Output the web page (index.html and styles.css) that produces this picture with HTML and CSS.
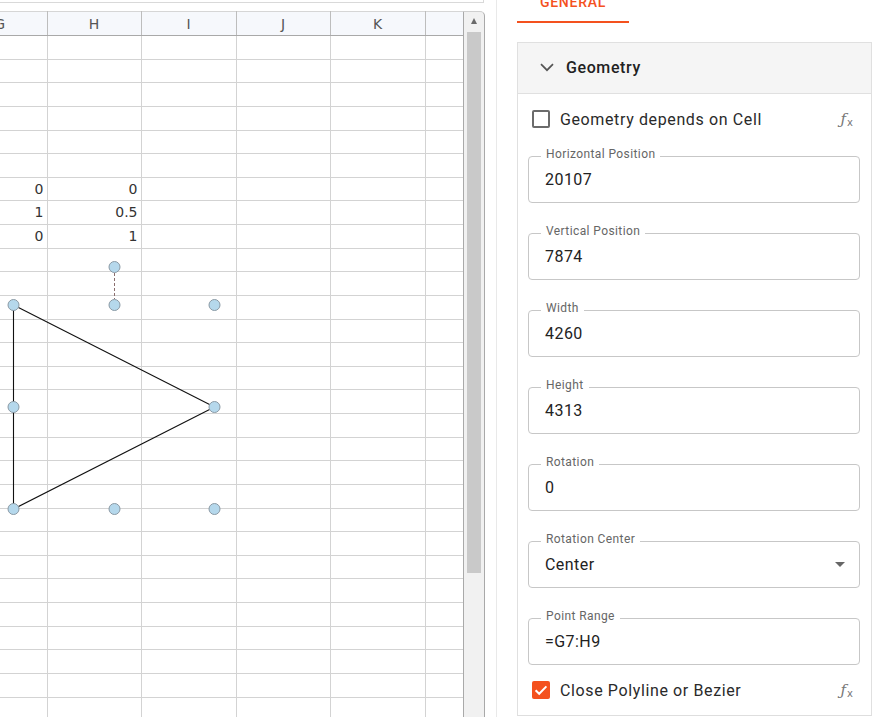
FILE: index.html
```html
<!DOCTYPE html>
<html>
<head>
<meta charset="utf-8">
<title>Geometry</title>
<link rel="stylesheet" href="styles.css">
</head>
<body>
<div class="app">
  <div class="sheet-area">
    <div class="formula-bar"></div>
    <div class="sheet">
      <div class="grid-wrap">
        <table class="grid">
          <colgroup>
            <col class="w94"><col class="w94"><col class="w95"><col class="w94"><col class="w95"><col class="w95">
          </colgroup>
          <thead>
            <tr><th>G</th><th>H</th><th>I</th><th>J</th><th>K</th><th></th></tr>
          </thead>
          <tbody>
            <tr><td></td><td></td><td></td><td></td><td></td><td></td></tr>
            <tr><td></td><td></td><td></td><td></td><td></td><td></td></tr>
            <tr><td></td><td></td><td></td><td></td><td></td><td></td></tr>
            <tr><td></td><td></td><td></td><td></td><td></td><td></td></tr>
            <tr><td></td><td></td><td></td><td></td><td></td><td></td></tr>
            <tr><td></td><td></td><td></td><td></td><td></td><td></td></tr>
            <tr><td>0</td><td>0</td><td></td><td></td><td></td><td></td></tr>
            <tr><td>1</td><td>0.5</td><td></td><td></td><td></td><td></td></tr>
            <tr><td>0</td><td>1</td><td></td><td></td><td></td><td></td></tr>
            <tr><td></td><td></td><td></td><td></td><td></td><td></td></tr>
            <tr><td></td><td></td><td></td><td></td><td></td><td></td></tr>
            <tr><td></td><td></td><td></td><td></td><td></td><td></td></tr>
            <tr><td></td><td></td><td></td><td></td><td></td><td></td></tr>
            <tr><td></td><td></td><td></td><td></td><td></td><td></td></tr>
            <tr><td></td><td></td><td></td><td></td><td></td><td></td></tr>
            <tr><td></td><td></td><td></td><td></td><td></td><td></td></tr>
            <tr><td></td><td></td><td></td><td></td><td></td><td></td></tr>
            <tr><td></td><td></td><td></td><td></td><td></td><td></td></tr>
            <tr><td></td><td></td><td></td><td></td><td></td><td></td></tr>
            <tr><td></td><td></td><td></td><td></td><td></td><td></td></tr>
            <tr><td></td><td></td><td></td><td></td><td></td><td></td></tr>
            <tr><td></td><td></td><td></td><td></td><td></td><td></td></tr>
            <tr><td></td><td></td><td></td><td></td><td></td><td></td></tr>
            <tr><td></td><td></td><td></td><td></td><td></td><td></td></tr>
            <tr><td></td><td></td><td></td><td></td><td></td><td></td></tr>
            <tr><td></td><td></td><td></td><td></td><td></td><td></td></tr>
            <tr><td></td><td></td><td></td><td></td><td></td><td></td></tr>
            <tr><td></td><td></td><td></td><td></td><td></td><td></td></tr>
            <tr><td></td><td></td><td></td><td></td><td></td><td></td></tr>
          </tbody>
        </table>
        <svg class="shape" width="463" height="706" viewBox="0 0 463 706">
          <polygon points="13.5,294 214.5,396 13.5,498" fill="none" stroke="#111" stroke-width="1.1"/>
          <line x1="114.5" y1="262" x2="114.5" y2="288" stroke="#8a6e6e" stroke-width="1" stroke-dasharray="3,2"/>
          <g fill="#b5d8ec" stroke="#8b9aa5" stroke-width="1">
            <circle cx="114.5" cy="256" r="5.5"/>
            <circle cx="13.5" cy="294" r="5.5"/>
            <circle cx="114.5" cy="294" r="5.5"/>
            <circle cx="214.5" cy="294" r="5.5"/>
            <circle cx="13.5" cy="396" r="5.5"/>
            <circle cx="214.5" cy="396" r="5.5"/>
            <circle cx="13.5" cy="498" r="5.5"/>
            <circle cx="114.5" cy="498" r="5.5"/>
            <circle cx="214.5" cy="498" r="5.5"/>
          </g>
        </svg>
      </div>
      <div class="vscroll">
        <div class="vscroll-arrow"></div>
        <div class="vscroll-thumb"></div>
      </div>
    </div>
  </div>

  <div class="panel">
    <div class="tabs">
      <div class="tab active">General</div>
    </div>
    <div class="card">
      <div class="card-head">
        <svg class="chevron" width="14" height="9" viewBox="0 0 14 9"><path d="M1 1.2 L7 7.2 L13 1.2" fill="none" stroke="#555" stroke-width="1.7"/></svg>
        <span class="card-title">Geometry</span>
      </div>
      <div class="card-body">
        <div class="check-row">
          <span class="cb"></span>
          <span class="cb-label">Geometry depends on Cell</span>
          <span class="fx">ƒ<span class="fx-x">x</span></span>
        </div>
        <div class="field"><span class="field-label">Horizontal Position</span><span class="field-value">20107</span></div>
        <div class="field"><span class="field-label">Vertical Position</span><span class="field-value">7874</span></div>
        <div class="field"><span class="field-label">Width</span><span class="field-value">4260</span></div>
        <div class="field"><span class="field-label">Height</span><span class="field-value">4313</span></div>
        <div class="field"><span class="field-label">Rotation</span><span class="field-value">0</span></div>
        <div class="field select"><span class="field-label">Rotation Center</span><span class="field-value">Center</span><span class="caret"></span></div>
        <div class="field"><span class="field-label">Point Range</span><span class="field-value">=G7:H9</span></div>
        <div class="check-row last">
          <span class="cb checked"><svg width="18" height="18" viewBox="0 0 18 18"><path d="M3.6 9.2 L7.2 12.8 L14.4 5.4" fill="none" stroke="#fff" stroke-width="2"/></svg></span>
          <span class="cb-label">Close Polyline or Bezier</span>
          <span class="fx">ƒ<span class="fx-x">x</span></span>
        </div>
      </div>
    </div>
  </div>
</div>
</body>
</html>
```

FILE: styles.css
```css
* { box-sizing: border-box; }
html, body { margin: 0; padding: 0; background: #fff; overflow: hidden; }
body { font-family: Roboto, "Noto Sans", sans-serif; color: #212121; }

.app { display: flex; height: 717px; }

/* ---------- spreadsheet ---------- */
.sheet-area { width: 485px; flex: none; display: flex; flex-direction: column; }
.formula-bar {
  flex: none; width: 484px; height: 3px;
  border-bottom: 1px solid #d9d9d9; border-right: 1px solid #d9d9d9;
  margin-bottom: 8px;
}
.sheet { flex: 1; display: flex; min-height: 0; }
.grid-wrap { width: 463px; flex: none; position: relative; overflow: hidden; }

.grid {
  border-collapse: collapse; table-layout: fixed;
  width: 567px; margin-left: -47px;
  font-family: "DejaVu Sans", Verdana, sans-serif; font-size: 14px; color: #333;
}
.w94 { width: 94px; }
.w95 { width: 95px; }
.grid th {
  height: 24px; padding: 0;
  background: #f6f8fc; color: #555; font-weight: normal; font-size: 14px;
  border-top: 1px solid #d6d6d6; border-right: 1px solid #bdbdbd; border-bottom: 1px solid #a9a9a9;
}
.grid td {
  height: 23.64px; padding: 0 3px 0 4px; text-align: right; line-height: 15px;
  border-right: 1px solid #d3d3d3; border-bottom: 1px solid #d3d3d3;
}
.shape { position: absolute; left: 0; top: 0; }

.vscroll {
  width: 22px; flex: none; background: #f1f1f1;
  border-left: 1px solid #a9a9a9; border-right: 1px solid #a9a9a9; border-top: 1px solid #cfcfcf;
  border-top-right-radius: 5px;
  display: flex; flex-direction: column; align-items: center;
}
.vscroll-arrow {
  width: 0; height: 0; margin-top: 6px;
  border-left: 3.5px solid transparent; border-right: 3.5px solid transparent;
  border-bottom: 6px solid #6a6a6a;
}
.vscroll-thumb { width: 14px; height: 541px; margin-top: 8px; background: #c9c9c9; }

/* ---------- panel ---------- */
.panel {
  flex: 1; margin-left: 11px; border-left: 1px solid #e9e9e9;
  padding: 0 5px 0 20px;
}
.tabs { display: flex; margin-top: -6px; }
.tab {
  width: 112px; text-align: center;
  font-size: 14px; font-weight: 500; line-height: 16px; letter-spacing: 0.75px;
  text-transform: uppercase; color: #f4511e;
  padding-bottom: 11px; border-bottom: 2px solid #f4511e;
}
.card { margin-top: 19px; width: 355px; border: 1px solid #e0e0e0; border-bottom-color: #dedede; }
.card-head {
  height: 51px; background: #f5f5f5; border-bottom: 1px solid #e0e0e0;
  display: flex; align-items: center; padding-left: 22px; padding-bottom: 1px;
}
.chevron { display: block; }
.card-title { margin-left: 12px; font-size: 16px; font-weight: 500; letter-spacing: 0.6px; color: #222; }

.card-body { padding: 5px 11px 5px 10px; }
.check-row { height: 40px; display: flex; align-items: center; }
.check-row.last { margin-top: 5px; }
.cb {
  width: 18px; height: 18px; margin-left: 4px; flex: none;
  border: 2px solid #6b6b6b; border-radius: 2px;
}
.cb.checked { border: none; background: #f4511e; }
.cb.checked svg { display: block; }
.cb-label { margin-left: 10px; font-size: 16px; letter-spacing: 0.62px; color: #2a2a2a; }
.fx {
  margin-left: auto; margin-right: 7px;
  font-family: "DejaVu Serif", serif; font-style: italic; font-size: 15px; color: #777;
}
.fx-x { font-family: "DejaVu Sans", sans-serif; font-style: normal; font-size: 10px; position: relative; top: 2px; margin-left: 1px; }

.field {
  position: relative; height: 47px; margin-top: 30px;
  border: 1px solid #c7c7c7; border-radius: 4px;
  display: flex; align-items: center; padding: 0 15px 0 16px;
}
.check-row + .field { margin-top: 17px; }
.field-label {
  position: absolute; left: 12px; top: -10px;
  padding: 0 5px; background: #fff;
  font-size: 12px; line-height: 14px; letter-spacing: 0.4px; color: #666;
}
.field-value { font-size: 16px; letter-spacing: 0.45px; color: #222; }
.select { padding-right: 14px; }
.caret {
  margin-left: auto; width: 0; height: 0;
  border-left: 5px solid transparent; border-right: 5px solid transparent;
  border-top: 5px solid #666;
}
```
